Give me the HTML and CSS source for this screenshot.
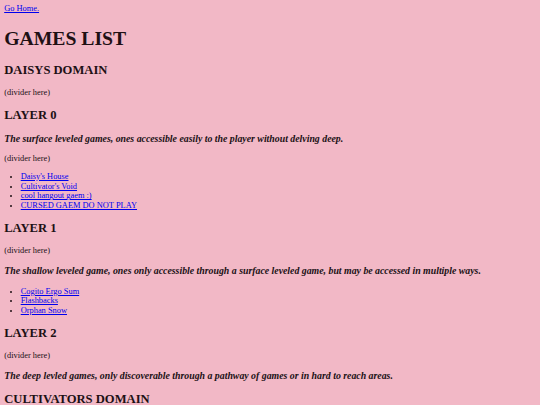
FILE: index.html
```html
<!DOCTYPE html>
<html>
<head>
<meta charset="utf-8">
<title>Games List</title>
<link rel="stylesheet" href="styles.css">
</head>
<body>
<a class="home" href="#">Go Home.</a>
<h1 class="title">GAMES LIST</h1>
<h2 class="domain">DAISYS DOMAIN</h2>
<p class="divider">(divider here)</p>
<h2 class="layer">LAYER 0</h2>
<h3 class="desc">The surface leveled games, ones accessible easily to the player without delving deep.</h3>
<p class="divider">(divider here)</p>
<ul class="games">
  <li><a href="#">Daisy's House</a></li>
  <li><a href="#">Cultivator's Void</a></li>
  <li><a href="#">cool hangout gaem :)</a></li>
  <li><a href="#">CURSED GAEM DO NOT PLAY</a></li>
</ul>
<h2 class="layer">LAYER 1</h2>
<p class="divider">(divider here)</p>
<h3 class="desc">The shallow leveled game, ones only accessible through a surface leveled game, but may be accessed in multiple ways.</h3>
<ul class="games">
  <li><a href="#">Cogito Ergo Sum</a></li>
  <li><a href="#">Flashbacks</a></li>
  <li><a href="#">Orphan Snow</a></li>
</ul>
<h2 class="layer">LAYER 2</h2>
<p class="divider">(divider here)</p>
<h3 class="desc">The deep levled games, only discoverable through a pathway of games or in hard to reach areas.</h3>
<h2 class="domain">CULTIVATORS DOMAIN</h2>
</body>
</html>
```
FILE: styles.css
```css
html {
  background: #f2b8c6;
}
body {
  margin: 4.2px;
  font-family: "Liberation Serif", "Times New Roman", serif;
  font-size: 8.4px;
  line-height: 1.15;
  color: #201014;
}
a {
  color: #0000ee;
}
.title {
  font-size: 19.7px;
  margin: 0.67em 0;
}
.domain, .layer {
  font-size: 1.5em;
  margin: 0.83em 0;
}
.desc {
  font-size: 1.17em;
  font-style: italic;
  margin: 1em 0;
}
.divider {
  margin: 1em 0;
}
.games {
  margin: 1em 0;
  padding-left: 16.5px;
}
```
